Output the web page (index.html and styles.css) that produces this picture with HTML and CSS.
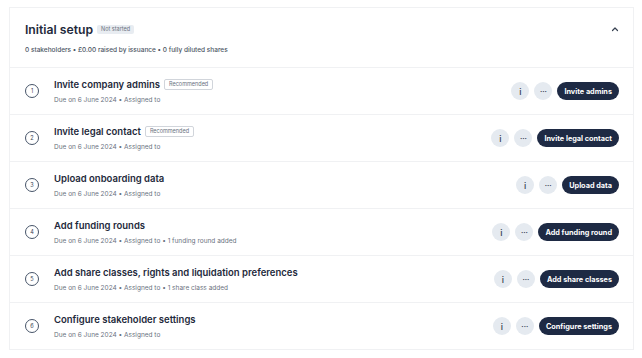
FILE: index.html
```html
<!DOCTYPE html>
<html lang="en">
<head>
  <meta charset="UTF-8">
  <meta name="viewport" content="width=device-width, initial-scale=1.0">
  <title>Initial setup</title>
  <link rel="stylesheet" href="styles.css">
</head>
<body>
  <div class="card">
    <div class="card-header">
      <div class="header-text">
        <div class="title-line">
          <h1 class="card-title">Initial setup</h1>
          <span class="badge badge-grey">Not started</span>
        </div>
        <p class="card-description">0 stakeholders • £0.00 raised by issuance • 0 fully diluted shares</p>
      </div>
      <svg class="chevron" width="8" height="6" viewBox="0 0 8 6">
        <path d="M1.5 4.5 L4 2 L6.5 4.5" fill="none" stroke="#374151" stroke-width="1.2" stroke-linecap="round" stroke-linejoin="round"/>
      </svg>
    </div>

    <div class="task">
      <span class="step">1</span>
      <div class="task-body">
        <div class="title-line">
          <span class="task-title">Invite company admins</span>
          <span class="badge badge-outline">Recommended</span>
        </div>
        <p class="task-meta">Due on 6 June 2024 • Assigned to</p>
      </div>
      <div class="actions">
        <button class="icon-btn info">i</button>
        <button class="icon-btn">···</button>
        <button class="primary">Invite admins</button>
      </div>
    </div>

    <div class="task">
      <span class="step">2</span>
      <div class="task-body">
        <div class="title-line">
          <span class="task-title">Invite legal contact</span>
          <span class="badge badge-outline">Recommended</span>
        </div>
        <p class="task-meta">Due on 6 June 2024 • Assigned to</p>
      </div>
      <div class="actions">
        <button class="icon-btn info">i</button>
        <button class="icon-btn">···</button>
        <button class="primary">Invite legal contact</button>
      </div>
    </div>

    <div class="task">
      <span class="step">3</span>
      <div class="task-body">
        <div class="title-line">
          <span class="task-title">Upload onboarding data</span>
        </div>
        <p class="task-meta">Due on 6 June 2024 • Assigned to</p>
      </div>
      <div class="actions">
        <button class="icon-btn info">i</button>
        <button class="icon-btn">···</button>
        <button class="primary">Upload data</button>
      </div>
    </div>

    <div class="task">
      <span class="step">4</span>
      <div class="task-body">
        <div class="title-line">
          <span class="task-title">Add funding rounds</span>
        </div>
        <p class="task-meta">Due on 6 June 2024 • Assigned to • 1 funding round added</p>
      </div>
      <div class="actions">
        <button class="icon-btn info">i</button>
        <button class="icon-btn">···</button>
        <button class="primary">Add funding round</button>
      </div>
    </div>

    <div class="task">
      <span class="step">5</span>
      <div class="task-body">
        <div class="title-line">
          <span class="task-title">Add share classes, rights and liquidation preferences</span>
        </div>
        <p class="task-meta">Due on 6 June 2024 • Assigned to • 1 share class added</p>
      </div>
      <div class="actions">
        <button class="icon-btn info">i</button>
        <button class="icon-btn">···</button>
        <button class="primary">Add share classes</button>
      </div>
    </div>

    <div class="task">
      <span class="step">6</span>
      <div class="task-body">
        <div class="title-line">
          <span class="task-title">Configure stakeholder settings</span>
        </div>
        <p class="task-meta">Due on 6 June 2024 • Assigned to</p>
      </div>
      <div class="actions">
        <button class="icon-btn info">i</button>
        <button class="icon-btn">···</button>
        <button class="primary">Configure settings</button>
      </div>
    </div>
  </div>
</body>
</html>
```

FILE: styles.css
```css
body {
  font-family: Inter, "Noto Sans", sans-serif;
  margin: 0;
  padding: 7px 8px 8px 9px;
  background-color: white;
  color: #1e293b;
}
.card {
  border: 1px solid #f0f1f3;
  background-color: white;
}
.card-header {
  height: 59px;
  display: flex;
  align-items: flex-start;
  justify-content: space-between;
  padding: 0 14px 0 15px;
  border-bottom: 1px solid #f0f1f3;
}
.header-text {
  padding-top: 13px;
}
.chevron {
  margin-top: 18px;
}
.title-line {
  display: flex;
  align-items: center;
  gap: 4px;
}
.card-title {
  font-size: 12.2px;
  font-weight: 600;
  line-height: 17px;
  margin: 0;
}
.card-description {
  color: #4b5563;
  font-size: 6.5px;
  font-weight: 500;
  margin: 8px 0 0 0;
}
.badge {
  font-size: 5.5px;
  line-height: 9px;
  padding: 0 4px;
  border-radius: 2px;
  color: #6b7280;
}
.badge-grey {
  background-color: #e8ecf1;
}
.badge-outline {
  border: 1px solid #d1d5db;
  background-color: white;
}
.task {
  height: 46px;
  display: flex;
  align-items: center;
  padding: 0 14px 0 15px;
  border-bottom: 1px solid #f0f1f3;
}
.task:last-child {
  border-bottom: none;
}
.step {
  width: 12px;
  height: 12px;
  border: 1px solid #475569;
  border-radius: 50%;
  font-size: 5.5px;
  display: flex;
  align-items: center;
  justify-content: center;
  color: #374151;
  margin-right: 15px;
  flex-shrink: 0;
}
.task-body {
  flex: 1;
}
.task-title {
  font-size: 9.5px;
  font-weight: 600;
  line-height: 13px;
  color: #1e293b;
}
.task-meta {
  color: #6b7280;
  font-size: 6.5px;
  margin: 5px 0 0 0;
}
.actions {
  display: flex;
  align-items: center;
  gap: 5px;
}
button {
  font-family: Inter, "Noto Sans", sans-serif;
  border: none;
  cursor: pointer;
  padding: 0;
}
.icon-btn {
  width: 18px;
  height: 18px;
  border-radius: 50%;
  background-color: #e5eaf0;
  color: #374151;
  font-size: 7px;
  font-weight: 700;
  display: flex;
  align-items: center;
  justify-content: center;
}
.icon-btn.info {
  font-size: 9px;
  font-weight: 500;
}
.primary {
  height: 18px;
  padding: 0 7px;
  border-radius: 9px;
  background-color: #1e2a44;
  color: white;
  font-size: 7.3px;
  font-weight: 700;
}
```
